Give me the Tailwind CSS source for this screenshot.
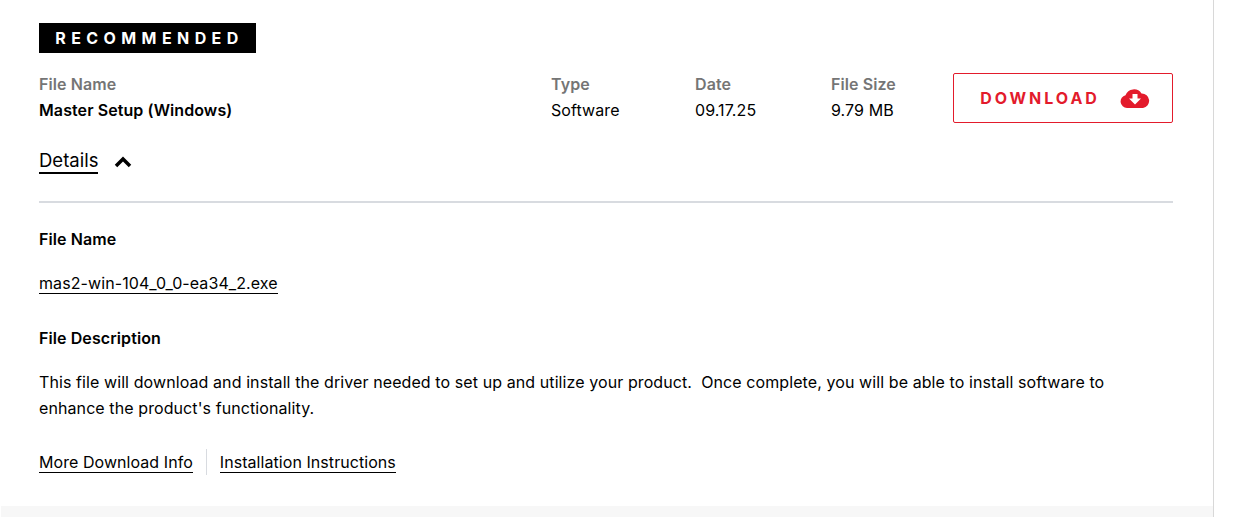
<!doctype html>
<html><head><meta charset="utf-8"><script src="https://cdn.jsdelivr.net/npm/@tailwindcss/browser@4"></script></head>
<body class="bg-white">
<div class="flex h-[517px] w-[1233px] overflow-hidden bg-white font-['Inter',sans-serif] text-[16px] tracking-[0.09px] text-black">
<div class="flex w-[1213px] shrink-0 flex-col">
<main class="flex-1 pl-[39px] pr-[40px] pt-[23px]">
<div class="flex h-[30px] w-[217px] items-center justify-center bg-black pl-[4px] text-[16px] font-bold tracking-[5.400px] text-white">RECOMMENDED</div>
<div class="mt-[20px] flex h-[50px] items-start">
<div class="w-[512px]"><div class="leading-[22px] font-semibold text-[#757575]">File Name</div><div class="mt-[4px] leading-[22px] font-semibold">Master Setup (Windows)</div></div>
<div class="w-[144px]"><div class="leading-[22px] font-semibold text-[#757575]">Type</div><div class="mt-[4px] leading-[22px]">Software</div></div>
<div class="w-[136px]"><div class="leading-[22px] font-semibold text-[#757575]">Date</div><div class="mt-[4px] leading-[22px]">09.17.25</div></div>
<div class="w-[122px]"><div class="leading-[22px] font-semibold text-[#757575]">File Size</div><div class="mt-[4px] leading-[22px]">9.79 MB</div></div>
<div class="flex h-[50px] w-[220px] items-center justify-center gap-[20px] rounded-[2px] border border-[#e31b2c] pl-[4px] text-[16px] font-bold tracking-[0.185em] text-[#e31b2c]">DOWNLOAD
<svg width="30" height="20" viewBox="0 0 30 20"><path fill="#e31b2c" d="M7 20a6.500 6.500 0 0 1-1.500-12.800A9 9 0 0 1 21.500 5.500 7.300 7.300 0 0 1 23 20Z"/><path fill="#fff" d="M12.500 6h5v4.500h3.500l-6 6-6-6h3.500z"/></svg></div>
</div>
<div class="mt-[26px] flex h-[25px] items-center gap-[16px]"><span class="border-b-2 border-black text-[18.500px] leading-[23px] tracking-normal">Details</span><svg width="18" height="12" viewBox="0 0 18 12"><path d="M2 10l7-7 7 7" fill="none" stroke="#000" stroke-width="3.500"/></svg></div>
<div class="mt-[27px] h-[2px] bg-[#d8dbe0]"></div>
<div class="mt-[25px] leading-[22px] font-semibold">File Name</div>
<div class="mt-[22px] leading-[22px]"><span class="border-b border-black">mas2-win-104_0_0-ea34_2.exe</span></div>
<div class="mt-[33px] leading-[22px] font-semibold">File Description</div>
<div class="mt-[20px] leading-[26px]">This file will download and install the driver needed to set up and utilize your product.&nbsp; Once complete, you will be able to install software to<br>enhance the product's functionality.</div>
<div class="mt-[28px] flex h-[26px] items-center tracking-[0.06px]"><span class="border-b border-black leading-[20px]">More Download Info</span><span class="mx-[13px] h-[26px] w-px bg-[#d8dbe0]"></span><span class="border-b border-black leading-[20px]">Installation Instructions</span></div>
</main>
<div class="ml-px h-[11px] bg-[#f7f7f7]"></div>
</div>
<div class="w-px bg-[#d8d8d8]"></div>
<div class="flex-1"></div>
</div>
</body></html>
